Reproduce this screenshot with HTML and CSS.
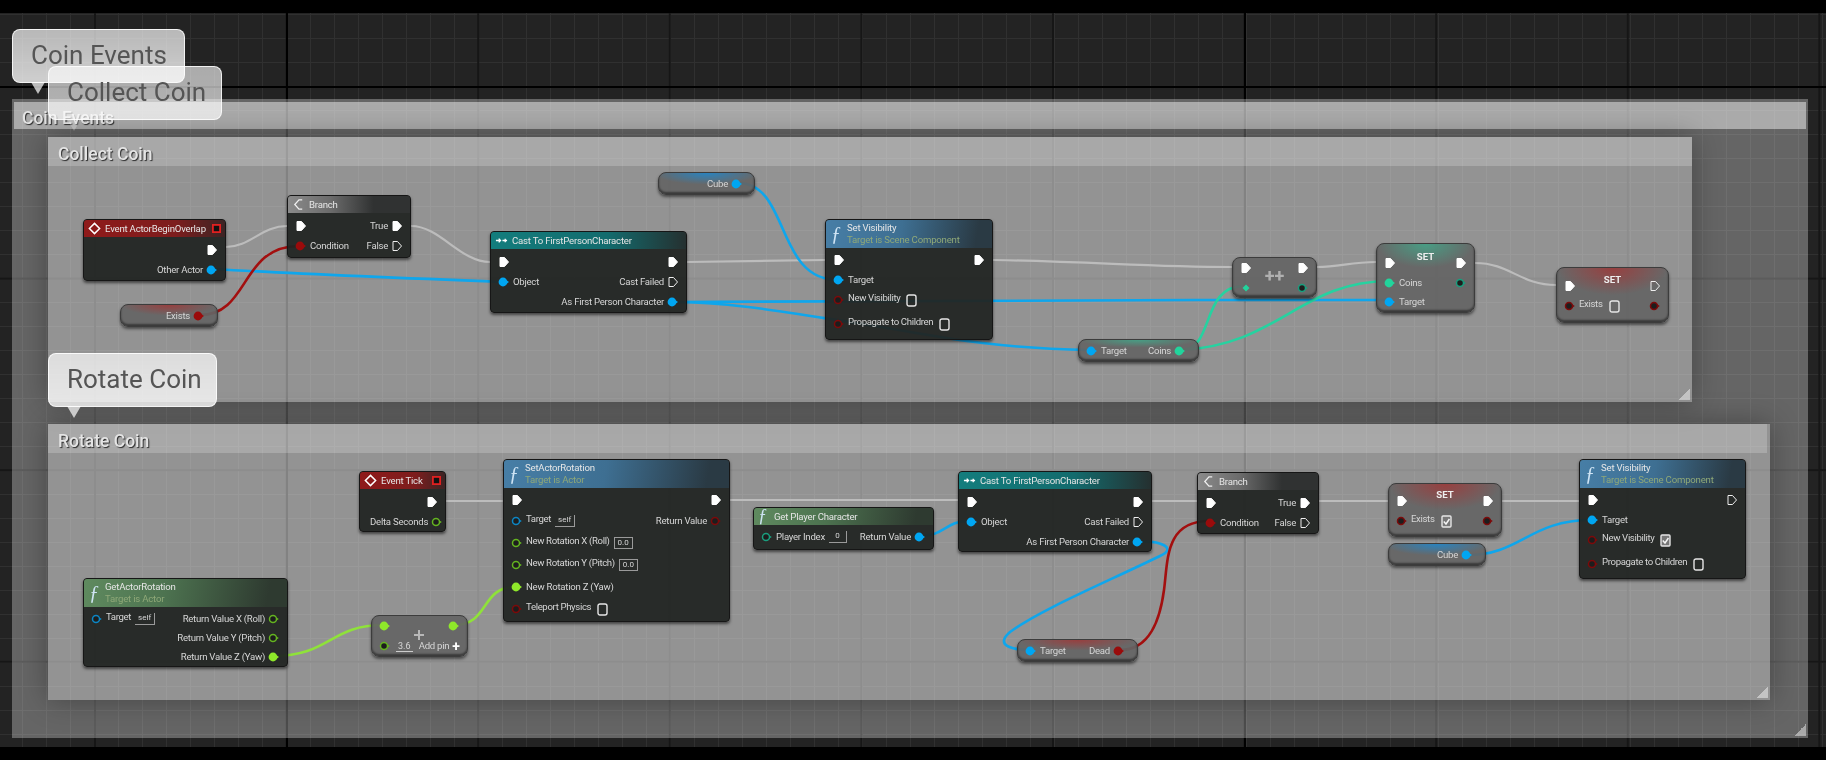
FILE: index.html
```html
<!DOCTYPE html>
<html>
<head>
  <title>Coin Blueprint</title>
  <link rel="stylesheet" href="styles.css">
</head>
<body>
  <svg class="defs" width="0" height="0">
    <symbol id="exec" viewBox="0 0 12 12"><path d="M2 1.5h4.5L10.5 6l-4 4.5H2z" fill="#fff" stroke="#fff" stroke-linejoin="round"/></symbol>
    <symbol id="exec-o" viewBox="0 0 12 12"><path d="M2 1.5h4.5L10.5 6l-4 4.5H2z" fill="none" stroke="#eee" stroke-linejoin="round"/></symbol>
    <symbol id="dot" viewBox="0 0 12 12"><circle cx="5" cy="6" r="4.4" fill="currentColor"/><path d="M8.8 4.5 11 6 8.8 7.5z" fill="currentColor"/></symbol>
    <symbol id="ring" viewBox="0 0 12 12"><circle cx="5" cy="6" r="3.5" fill="#1d1d1d" stroke="currentColor" stroke-width="1.5"/><path d="M8.5 4.5 10.8 6 8.5 7.5z" fill="currentColor"/></symbol>
    <symbol id="diamond" viewBox="0 0 12 12"><path d="M6 2.5 9.5 6 6 9.5 2.5 6z" fill="currentColor"/></symbol>
    <symbol id="box" viewBox="0 0 11 13"><rect x="1" y="1" width="9" height="11" rx="2" fill="none" stroke="#e6e6e6" stroke-width="1.4"/></symbol>
    <symbol id="box-on" viewBox="0 0 11 13"><rect x="1" y="1" width="9" height="11" rx="1" fill="#777" stroke="#e6e6e6" stroke-width="1.4"/><path d="M2.8 6.5 5 9l3.4-5" fill="none" stroke="#f4f4f4" stroke-width="1.5"/></symbol>
    <symbol id="diamond-icon" viewBox="0 0 14 14"><path d="M7 1.5 12.5 7 7 12.5 1.5 7z" fill="none" stroke="#fff" stroke-width="1.6"/></symbol>
    <symbol id="branch-icon" viewBox="0 0 14 14"><path d="M11 2H7.5L3 7l4.5 5H11" fill="none" stroke="#eee" stroke-width="1.4"/></symbol>
    <symbol id="cast-icon" viewBox="0 0 14 14"><path d="M1 7h5M4 5l2 2-2 2M8 7h5M11 5v4" fill="none" stroke="#fff" stroke-width="1.4"/></symbol>
    <symbol id="stop-icon" viewBox="0 0 10 10"><rect x="1" y="1" width="8" height="8" fill="#111" stroke="#e02020" stroke-width="2"/></symbol>
    <symbol id="plus-icon" viewBox="0 0 12 12"><path d="M6 1v10M1 6h10" stroke="#b8b8b8" stroke-width="2"/></symbol>
  </svg>

  <main class="graph">
    <section class="comment c-events"><h2 class="comment-title">Coin Events</h2></section>
    <section class="comment c-collect"><h2 class="comment-title">Collect Coin</h2></section>
    <section class="comment c-rotate"><h2 class="comment-title">Rotate Coin</h2></section>

    <svg class="wires" viewBox="0 13 1826 734">
      <g class="w-exec">
        <path d="M226 247C250 247 262 226 287 226"/>
        <path d="M411 226C440 226 460 262 490 262"/>
        <path d="M687 262L825 260"/>
        <path d="M993 260C1100 262 1150 267 1232 267"/>
        <path d="M1317 267C1340 267 1350 262 1376 262"/>
        <path d="M1475 263C1510 263 1520 285 1556 285"/>
        <path d="M446 501H503M730 500H958M1152 501H1197M1319 501H1388M1502 501H1579"/>
      </g>
      <g class="w-blue">
        <path d="M212 269C300 274 400 278 503 282"/>
        <path d="M738 183C790 183 775 280 838 280"/>
        <path d="M671 302C720 300 1100 300 1390 300"/>
        <path d="M671 302C740 302 800 315 881 327C940 337 990 348 1090 350"/>
        <path d="M920 536C945 536 945 521 969 521"/>
        <path d="M1138 542C1160 540 1178 548 1160 556C1100 585 1040 610 1010 632C995 645 1010 650 1032 650"/>
        <path d="M1468 555C1520 555 1530 520 1591 520"/>
      </g>
      <g class="w-red">
        <path d="M200 315C250 315 240 246 299 246"/>
        <path d="M1120 650C1150 650 1160 620 1164 590C1168 560 1165 521 1209 521"/>
      </g>
      <g class="w-teal">
        <path d="M1181 350C1215 350 1200 286 1244 286"/>
        <path d="M1181 350C1280 345 1300 281 1390 281"/>
      </g>
      <g class="w-lime">
        <path d="M273 656C330 656 330 625 383 625"/>
        <path d="M454 625C490 625 480 587 515 587"/>
      </g>
    </svg>

    <!-- collect coin -->
    <div class="node n-overlap">
      <div class="head head-red"><svg class="icon"><use href="#diamond-icon"/></svg><span>Event ActorBeginOverlap</span><svg class="stop"><use href="#stop-icon"/></svg></div>
      <div class="body">
        <div class="row"><svg class="pin push"><use href="#exec"/></svg></div>
        <div class="row"><span class="label push">Other Actor</span><svg class="pin blue"><use href="#dot"/></svg></div>
      </div>
    </div>

    <div class="node n-branch1">
      <div class="head head-gray"><svg class="icon"><use href="#branch-icon"/></svg><span>Branch</span></div>
      <div class="body">
        <div class="row"><svg class="pin"><use href="#exec"/></svg><span class="label push">True</span><svg class="pin"><use href="#exec"/></svg></div>
        <div class="row"><svg class="pin red"><use href="#dot"/></svg><span class="label">Condition</span><span class="label push">False</span><svg class="pin"><use href="#exec-o"/></svg></div>
      </div>
    </div>

    <div class="var n-exists glow-red"><span class="label push">Exists</span><svg class="pin red"><use href="#dot"/></svg></div>

    <div class="node n-cast1">
      <div class="head head-teal"><svg class="icon"><use href="#cast-icon"/></svg><span>Cast To FirstPersonCharacter</span></div>
      <div class="body">
        <div class="row"><svg class="pin"><use href="#exec"/></svg><svg class="pin push"><use href="#exec"/></svg></div>
        <div class="row"><svg class="pin blue"><use href="#dot"/></svg><span class="label">Object</span><span class="label push">Cast Failed</span><svg class="pin"><use href="#exec-o"/></svg></div>
        <div class="row"><span class="label push">As First Person Character</span><svg class="pin blue"><use href="#dot"/></svg></div>
      </div>
    </div>

    <div class="var n-cube1 glow-blue"><span class="label push">Cube</span><svg class="pin blue"><use href="#dot"/></svg></div>

    <div class="node n-vis1">
      <div class="head head-blue head-tall"><span class="fn">ƒ</span><div><div>Set Visibility</div><div class="sub">Target is Scene Component</div></div></div>
      <div class="body body-tight">
        <div class="row"><svg class="pin"><use href="#exec"/></svg><svg class="pin push"><use href="#exec"/></svg></div>
        <div class="row"><svg class="pin blue"><use href="#dot"/></svg><span class="label">Target</span></div>
        <div class="row"><svg class="pin dred"><use href="#ring"/></svg><span class="label up">New Visibility</span><svg class="check"><use href="#box"/></svg></div>
        <div class="row row-gap"><svg class="pin dred"><use href="#ring"/></svg><span class="label up">Propagate to Children</span><svg class="check"><use href="#box"/></svg></div>
      </div>
    </div>

    <div class="var n-coins glow-teal"><svg class="pin blue"><use href="#dot"/></svg><span class="label">Target</span><span class="label push">Coins</span><svg class="pin teal"><use href="#dot"/></svg></div>

    <div class="pure n-incr">
      <div class="row"><svg class="pin"><use href="#exec"/></svg><svg class="pin push"><use href="#exec"/></svg></div>
      <div class="row"><svg class="pin teal"><use href="#diamond"/></svg><svg class="pin push dteal"><use href="#ring"/></svg></div>
      <span class="mark">++</span>
    </div>

    <div class="pure n-set-coins glow-teal">
      <div class="row"><svg class="pin"><use href="#exec"/></svg><span class="set-label">SET</span><svg class="pin"><use href="#exec"/></svg></div>
      <div class="row row-sm"><svg class="pin teal"><use href="#dot"/></svg><span class="label">Coins</span><svg class="pin push dteal"><use href="#ring"/></svg></div>
      <div class="row row-sm"><svg class="pin blue"><use href="#dot"/></svg><span class="label">Target</span></div>
    </div>

    <div class="pure n-set-exists1 glow-red">
      <div class="row"><svg class="pin"><use href="#exec"/></svg><span class="set-label">SET</span><svg class="pin"><use href="#exec-o"/></svg></div>
      <div class="row"><svg class="pin dred"><use href="#ring"/></svg><span class="label up">Exists</span><svg class="check"><use href="#box"/></svg><svg class="pin push dred"><use href="#ring"/></svg></div>
    </div>

    <!-- rotate coin -->
    <div class="node n-tick">
      <div class="head head-red"><svg class="icon"><use href="#diamond-icon"/></svg><span>Event Tick</span><svg class="stop"><use href="#stop-icon"/></svg></div>
      <div class="body">
        <div class="row"><svg class="pin push"><use href="#exec"/></svg></div>
        <div class="row"><span class="label push">Delta Seconds</span><svg class="pin hlime"><use href="#ring"/></svg></div>
      </div>
    </div>

    <div class="node n-get-rot">
      <div class="head head-green head-tall"><span class="fn">ƒ</span><div><div>GetActorRotation</div><div class="sub">Target is Actor</div></div></div>
      <div class="body body-3">
        <div class="row row-sm"><svg class="pin hblue"><use href="#ring"/></svg><span class="label up">Target</span><span class="field field-self">self</span><span class="label push">Return Value X (Roll)</span><svg class="pin hlime"><use href="#ring"/></svg></div>
        <div class="row row-sm"><span class="label push">Return Value Y (Pitch)</span><svg class="pin hlime"><use href="#ring"/></svg></div>
        <div class="row row-sm"><span class="label push">Return Value Z (Yaw)</span><svg class="pin lime"><use href="#dot"/></svg></div>
      </div>
    </div>

    <div class="pure n-add">
      <div class="row"><svg class="pin lime"><use href="#dot"/></svg><svg class="pin push lime"><use href="#dot"/></svg></div>
      <div class="row"><svg class="pin hlime"><use href="#ring"/></svg><span class="field-line">3.6</span><span class="label">Add pin</span><span class="plus">+</span></div>
      <svg class="mark-plus"><use href="#plus-icon"/></svg>
    </div>

    <div class="node n-set-rot">
      <div class="head head-blue head-tall"><span class="fn">ƒ</span><div><div>SetActorRotation</div><div class="sub">Target is Actor</div></div></div>
      <div class="body body-3">
        <div class="row"><svg class="pin"><use href="#exec"/></svg><svg class="pin push"><use href="#exec"/></svg></div>
        <div class="row row-lg"><svg class="pin hblue"><use href="#ring"/></svg><span class="label up">Target</span><span class="field field-self">self</span><span class="label push">Return Value</span><svg class="pin dred"><use href="#ring"/></svg></div>
        <div class="row row-lg"><svg class="pin hlime"><use href="#ring"/></svg><span class="label up">New Rotation X (Roll)</span><span class="field">0.0</span></div>
        <div class="row row-lg"><svg class="pin hlime"><use href="#ring"/></svg><span class="label up">New Rotation Y (Pitch)</span><span class="field">0.0</span></div>
        <div class="row row-lg"><svg class="pin lime"><use href="#dot"/></svg><span class="label">New Rotation Z (Yaw)</span></div>
        <div class="row row-lg"><svg class="pin dred"><use href="#ring"/></svg><span class="label up">Teleport Physics</span><svg class="check"><use href="#box"/></svg></div>
      </div>
    </div>

    <div class="node n-player">
      <div class="head head-green"><span class="fn fn-sm">ƒ</span><span>Get Player Character</span></div>
      <div class="body body-tight">
        <div class="row"><svg class="pin dteal"><use href="#ring"/></svg><span class="label">Player Index</span><span class="field field-self">0</span><span class="label push">Return Value</span><svg class="pin blue"><use href="#dot"/></svg></div>
      </div>
    </div>

    <div class="node n-cast2">
      <div class="head head-teal"><svg class="icon"><use href="#cast-icon"/></svg><span>Cast To FirstPersonCharacter</span></div>
      <div class="body">
        <div class="row"><svg class="pin"><use href="#exec"/></svg><svg class="pin push"><use href="#exec"/></svg></div>
        <div class="row"><svg class="pin blue"><use href="#dot"/></svg><span class="label">Object</span><span class="label push">Cast Failed</span><svg class="pin"><use href="#exec-o"/></svg></div>
        <div class="row"><span class="label push">As First Person Character</span><svg class="pin blue"><use href="#dot"/></svg></div>
      </div>
    </div>

    <div class="var n-dead glow-red"><svg class="pin blue"><use href="#dot"/></svg><span class="label">Target</span><span class="label push">Dead</span><svg class="pin red"><use href="#dot"/></svg></div>

    <div class="node n-branch2">
      <div class="head head-gray"><svg class="icon"><use href="#branch-icon"/></svg><span>Branch</span></div>
      <div class="body">
        <div class="row"><svg class="pin"><use href="#exec"/></svg><span class="label push">True</span><svg class="pin"><use href="#exec"/></svg></div>
        <div class="row"><svg class="pin red"><use href="#dot"/></svg><span class="label">Condition</span><span class="label push">False</span><svg class="pin"><use href="#exec-o"/></svg></div>
      </div>
    </div>

    <div class="pure n-set-exists2 glow-red">
      <div class="row"><svg class="pin"><use href="#exec"/></svg><span class="set-label">SET</span><svg class="pin"><use href="#exec"/></svg></div>
      <div class="row"><svg class="pin dred"><use href="#ring"/></svg><span class="label up">Exists</span><svg class="check"><use href="#box-on"/></svg><svg class="pin push dred"><use href="#ring"/></svg></div>
    </div>

    <div class="var n-cube2 glow-blue"><span class="label push">Cube</span><svg class="pin blue"><use href="#dot"/></svg></div>

    <div class="node n-vis2">
      <div class="head head-blue head-tall"><span class="fn">ƒ</span><div><div>Set Visibility</div><div class="sub">Target is Scene Component</div></div></div>
      <div class="body body-tight">
        <div class="row"><svg class="pin"><use href="#exec"/></svg><svg class="pin push"><use href="#exec-o"/></svg></div>
        <div class="row"><svg class="pin blue"><use href="#dot"/></svg><span class="label">Target</span></div>
        <div class="row"><svg class="pin dred"><use href="#ring"/></svg><span class="label up">New Visibility</span><svg class="check"><use href="#box-on"/></svg></div>
        <div class="row row-gap"><svg class="pin dred"><use href="#ring"/></svg><span class="label up">Propagate to Children</span><svg class="check"><use href="#box"/></svg></div>
      </div>
    </div>

    <!-- comment bubbles -->
    <div class="bubble b-events">Coin Events</div>
    <div class="bubble b-collect">Collect Coin</div>
    <div class="bubble b-rotate">Rotate Coin</div>
  </main>
</body>
</html>
```

FILE: styles.css
```css
html, body {
  margin: 0;
  background: #000;
}

.defs {
  position: absolute;
}

.graph {
  position: relative;
  width: 1826px;
  height: 734px;
  margin: 13px 0;
  overflow: hidden;
  font-family: Roboto, sans-serif;
  filter: blur(0.6px);
  background-color: #232323;
  background-image:
    linear-gradient(90deg, #000 2px, transparent 2px),
    linear-gradient(#000 2px, transparent 2px),
    linear-gradient(90deg, #161616 2px, transparent 2px),
    linear-gradient(#161616 2px, transparent 2px),
    linear-gradient(90deg, #303030 1.5px, transparent 1.5px),
    linear-gradient(#303030 1.5px, transparent 1.5px);
  background-size: 958px 958px, 958px 958px, 191.6px 191.6px, 191.6px 191.6px, 24px 24px, 24px 24px;
  background-position: 286px 73px, 286px 73px, 94px 73px, 94px 73px, 22px 1px, 22px 1px;
}

/* comment boxes */
.comment {
  position: absolute;
  box-sizing: border-box;
  background: rgba(255, 255, 255, 0.3);
}

.comment::after {
  content: "";
  position: absolute;
  right: 2px;
  bottom: 2px;
  width: 12px;
  height: 12px;
  background: linear-gradient(135deg, transparent 50%, rgba(255, 255, 255, 0.45) 50%);
}

.comment-title {
  box-sizing: border-box;
  height: 29px;
  margin: 0;
  padding: 3px 10px 0;
  background: rgba(255, 255, 255, 0.2);
  color: #e4e4e4;
  font-size: 17.5px;
  font-weight: 500;
  line-height: 29px;
  white-space: nowrap;
  text-shadow: 1px 1px 1px rgba(0, 0, 0, 0.75);
}

.c-events {
  left: 12px;
  top: 86px;
  width: 1796px;
  height: 639px;
}

.c-events .comment-title {
  height: 27px;
  margin: 3px 2px 0;
  padding-left: 8px;
  background: rgba(255, 255, 255, 0.45);
  line-height: 27px;
}

.c-collect,
.c-rotate {
  box-shadow: 0 0 28px rgba(0, 0, 0, 0.32);
}

.c-collect {
  left: 48px;
  top: 124px;
  width: 1644px;
  height: 265px;
}

.c-rotate {
  left: 48px;
  top: 411px;
  width: 1722px;
  height: 276px;
}

.c-rotate .comment-title {
  margin-right: 3px;
}

/* bubbles */
.bubble {
  position: absolute;
  box-sizing: border-box;
  height: 54px;
  padding: 0 18px;
  border: 1.5px solid rgba(255, 255, 255, 0.8);
  border-radius: 8px;
  background: linear-gradient(rgba(255, 255, 255, 0.68), rgba(255, 255, 255, 0.78));
  color: #555;
  font-size: 26px;
  line-height: 51px;
  white-space: nowrap;
}

.bubble::after {
  content: "";
  position: absolute;
  top: 52px;
  left: 18px;
  border-top: 12px solid rgba(255, 255, 255, 0.7);
  border-left: 7px solid transparent;
  border-right: 7px solid transparent;
}

.b-events {
  left: 12px;
  top: 16px;
  width: 173px;
}

.b-collect {
  left: 48px;
  top: 53px;
  width: 174px;
  background: linear-gradient(rgba(255, 255, 255, 0.62), rgba(255, 255, 255, 0.66));
}

.b-collect::after {
  border-top-color: rgba(255, 255, 255, 0.25);
}

.b-rotate {
  left: 48px;
  top: 340px;
  width: 169px;
}

/* wires */
.wires {
  position: absolute;
  left: 0;
  top: 0;
  width: 1826px;
  height: 734px;
}

.wires path {
  fill: none;
  stroke-width: 2.6;
}

.w-exec path { stroke: #bcbcbc; stroke-width: 2.2; }
.w-blue path { stroke: #0fa6ec; }
.w-red path { stroke: #a30f0f; }
.w-teal path { stroke: #26d2a0; }
.w-lime path { stroke: #8fe23a; }

/* nodes */
.node,
.pure,
.var {
  position: absolute;
  box-sizing: border-box;
  color: #d6d6d6;
  font-size: 9.6px;
}

.node {
  border: 1px solid #161616;
  border-radius: 4px;
  background: rgba(34, 37, 35, 0.95);
  box-shadow: 0 2px 3px rgba(0, 0, 0, 0.55);
  overflow: hidden;
}

.pure,
.var {
  border: 1px solid #3c3c3c;
  border-radius: 8px;
  background-color: rgba(100, 100, 100, 0.92);
  box-shadow: inset 0 -2px 2px rgba(0, 0, 0, 0.45), 0 2px 3px rgba(0, 0, 0, 0.5);
}

.pure {
  padding: 0 7px;
}

.var {
  display: flex;
  align-items: center;
  height: 23px;
  padding: 0 7px 0 7px;
}

.glow-red {
  background-image: radial-gradient(ellipse 50% 50% at 50% 0, rgba(190, 30, 30, 0.55), transparent);
}

.glow-blue {
  background-image: radial-gradient(ellipse 55% 55% at 50% 0, rgba(20, 140, 220, 0.75), transparent);
}

.glow-teal {
  background-image: radial-gradient(ellipse 50% 35% at 50% 0, rgba(40, 210, 160, 0.5), transparent);
}

.head {
  display: flex;
  align-items: center;
  gap: 4px;
  box-sizing: border-box;
  height: 17px;
  padding: 0 4px;
  color: #e6e6e6;
  letter-spacing: -0.2px;
  white-space: nowrap;
}

.head-tall {
  align-items: flex-start;
  height: 28px;
  padding: 2px 5px;
  line-height: 12px;
}

.head-red { background: linear-gradient(90deg, #8f1a1a, #7d1d1d 65%, #3c2424); }
.head-gray { background: linear-gradient(90deg, #8a8a8a, #6b6b6b 35%, #303232 70%); }
.head-teal { background: linear-gradient(90deg, #137d7d, #136b6d 60%, #253030); }
.head-blue { background: linear-gradient(100deg, #477ea6, #3e6f92 45%, #2a3a44 90%); }
.head-green { background: linear-gradient(100deg, #5f8a5f, #4d7350 40%, #2e3a30 90%); }

.sub {
  color: #8fa878;
}

.fn {
  width: 12px;
  color: #cfe4f4;
  font-family: "Liberation Serif", serif;
  font-size: 20px;
  font-style: italic;
  line-height: 24px;
}

.fn-sm {
  font-size: 18px;
  line-height: 17px;
}

.icon {
  flex: none;
  width: 13px;
  height: 13px;
}

.stop {
  flex: none;
  width: 9px;
  height: 9px;
  margin-left: auto;
}

.body {
  padding: 3px 7px 0;
}

.body-tight {
  padding-top: 2px;
}

.body-3 {
  padding-top: 2px;
}

.row {
  display: flex;
  align-items: center;
  justify-content: flex-start;
  height: 20px;
}

.row-sm {
  height: 19px;
}

.row-lg {
  height: 22px;
}

.row-gap {
  margin-top: 4px;
}

.pin {
  flex: none;
  width: 12px;
  height: 12px;
}

.push {
  margin-left: auto;
}

.label {
  margin-bottom: 1px;
  padding: 0 3px;
  white-space: nowrap;
  letter-spacing: -0.25px;
}

.up {
  margin-bottom: 5px;
  letter-spacing: -0.35px;
}

.check {
  flex: none;
  width: 11px;
  height: 13px;
  margin-left: 3px;
}

.field {
  box-sizing: border-box;
  min-width: 18px;
  height: 12px;
  margin-left: 1px;
  padding: 0 3px;
  border: 1px solid #9a9a9a;
  font-size: 8px;
  line-height: 10px;
  text-align: center;
}

.field-self {
  border-top: 0;
  border-left: 0;
}

.field-line {
  width: 17px;
  margin: 0 3px 0 5px;
  border-bottom: 1px solid #ccc;
  font-size: 9px;
  text-align: center;
}

.plus {
  margin-left: auto;
  color: #fff;
  font-size: 14px;
  font-weight: 700;
}

.set-label {
  margin: 0 auto 14px;
  color: #eee;
  font-weight: 700;
}

.mark {
  position: absolute;
  left: 0;
  right: 0;
  top: 7px;
  color: #b0b0b0;
  font-size: 18px;
  font-weight: 700;
  text-align: center;
}

.mark-plus {
  position: absolute;
  left: 41px;
  top: 13px;
  width: 12px;
  height: 12px;
}

/* pin colours */
.blue { color: #00a6f2; }
.hblue { color: #0c86c4; }
.red { color: #9a0b0b; }
.dred { color: #7c0a0a; }
.teal { color: #21d49c; }
.dteal { color: #1a9e7e; }
.lime { color: #8fe82a; }
.hlime { color: #64b420; }

/* node places on the graph */
.n-overlap { left: 83px; top: 206px; width: 143px; height: 62px; }
.n-branch1 { left: 287px; top: 182px; width: 124px; height: 63px; }
.n-exists { left: 120px; top: 291px; width: 98px; padding-right: 12px; }
.n-cast1 { left: 490px; top: 218px; width: 197px; height: 82px; }
.n-cube1 { left: 658px; top: 159px; width: 97px; padding-right: 11px; }
.n-vis1 { left: 825px; top: 206px; width: 168px; height: 121px; }
.n-coins { left: 1078px; top: 326px; width: 121px; padding-right: 12px; }
.n-incr { left: 1232px; top: 244px; width: 85px; height: 41px; }
.n-set-coins { left: 1376px; top: 230px; width: 99px; height: 70px; padding-top: 9px; }
.n-set-exists1 { left: 1556px; top: 254px; width: 113px; height: 56px; padding-top: 8px; }
.n-tick { left: 359px; top: 458px; width: 87px; height: 61px; }
.n-get-rot { left: 83px; top: 565px; width: 205px; height: 89px; }
.n-add { left: 371px; top: 602px; width: 97px; height: 42px; }
.n-set-rot { left: 503px; top: 446px; width: 227px; height: 163px; }
.n-player { left: 753px; top: 494px; width: 181px; height: 43px; }
.n-cast2 { left: 958px; top: 458px; width: 194px; height: 81px; }
.n-dead { left: 1017px; top: 626px; width: 121px; padding-right: 12px; }
.n-branch2 { left: 1197px; top: 459px; width: 122px; height: 62px; }
.n-set-exists2 { left: 1388px; top: 470px; width: 114px; height: 54px; padding-top: 7px; }
.n-cube2 { left: 1388px; top: 530px; width: 98px; padding-right: 12px; }
.n-vis2 { left: 1579px; top: 446px; width: 167px; height: 120px; }
```
